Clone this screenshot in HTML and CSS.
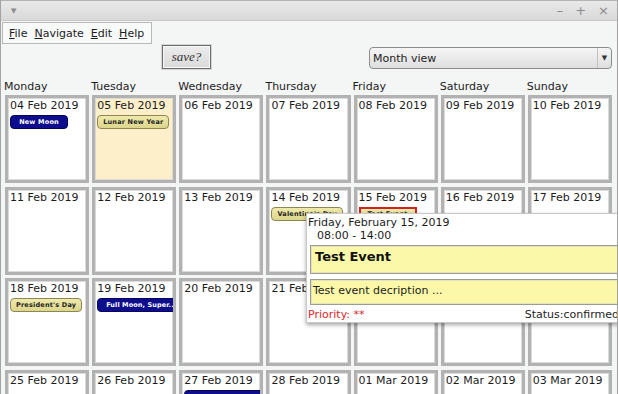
FILE: index.html
```html
<!DOCTYPE html>
<html lang="en">
<head>
    <meta charset="UTF-8">
    <title>Calendar</title>
    <link rel="stylesheet" href="styles.css">
</head>
<body>
    <div class="window">
        <div class="titlebar">
            <span class="tb-menu">&#9660;</span>
            <span class="tb-buttons"><span>&#8211;</span><span>+</span><span>&#215;</span></span>
        </div>

        <div class="menubar">
            <span><u>F</u>ile</span>
            <span><u>N</u>avigate</span>
            <span><u>E</u>dit</span>
            <span><u>H</u>elp</span>
        </div>

        <div class="toolbar">
            <button class="save-btn">save?</button>
            <div class="view-select">
                <span class="view-label">Month view</span>
                <span class="view-arrow">&#9660;</span>
            </div>
        </div>

        <div class="weekdays">
            <div>Monday</div>
            <div>Tuesday</div>
            <div>Wednesday</div>
            <div>Thursday</div>
            <div>Friday</div>
            <div>Saturday</div>
            <div>Sunday</div>
        </div>

        <div class="month">
            <div class="day"><div class="date">04 Feb 2019</div><div class="badge blue">New Moon</div></div>
            <div class="day today"><div class="date">05 Feb 2019</div><div class="badge khaki">Lunar New Year</div></div>
            <div class="day"><div class="date">06 Feb 2019</div></div>
            <div class="day"><div class="date">07 Feb 2019</div></div>
            <div class="day"><div class="date">08 Feb 2019</div></div>
            <div class="day"><div class="date">09 Feb 2019</div></div>
            <div class="day"><div class="date">10 Feb 2019</div></div>

            <div class="day"><div class="date">11 Feb 2019</div></div>
            <div class="day"><div class="date">12 Feb 2019</div></div>
            <div class="day"><div class="date">13 Feb 2019</div></div>
            <div class="day"><div class="date">14 Feb 2019</div><div class="badge khaki">Valentine's Day</div></div>
            <div class="day"><div class="date">15 Feb 2019</div><div class="badge khaki selected">Test Event</div></div>
            <div class="day"><div class="date">16 Feb 2019</div></div>
            <div class="day"><div class="date">17 Feb 2019</div></div>

            <div class="day"><div class="date">18 Feb 2019</div><div class="badge khaki">President's Day</div></div>
            <div class="day"><div class="date">19 Feb 2019</div><div class="badge blue wide">Full Moon, Super...</div></div>
            <div class="day"><div class="date">20 Feb 2019</div></div>
            <div class="day"><div class="date">21 Feb 2019</div></div>
            <div class="day"><div class="date">22 Feb 2019</div></div>
            <div class="day"><div class="date">23 Feb 2019</div></div>
            <div class="day"><div class="date">24 Feb 2019</div></div>

            <div class="day"><div class="date">25 Feb 2019</div></div>
            <div class="day"><div class="date">26 Feb 2019</div></div>
            <div class="day"><div class="date">27 Feb 2019</div><div class="badge blue wide">Last Quarter</div></div>
            <div class="day"><div class="date">28 Feb 2019</div></div>
            <div class="day"><div class="date">01 Mar 2019</div></div>
            <div class="day"><div class="date">02 Mar 2019</div></div>
            <div class="day"><div class="date">03 Mar 2019</div></div>
        </div>

        <!-- event tooltip -->
        <div class="event-popup">
            <div class="popup-date">Friday, February 15, 2019</div>
            <div class="popup-time">08:00 - 14:00</div>
            <div class="popup-box popup-title">Test Event</div>
            <div class="popup-box popup-desc">Test event decription ...</div>
            <div class="popup-footer">
                <span class="priority">Priority: **</span>
                <span class="status">Status:confirmed</span>
            </div>
        </div>
    </div>
</body>
</html>
```

FILE: styles.css
```css
* {
    margin: 0;
    padding: 0;
    box-sizing: border-box;
}

body {
    font-family: 'DejaVu Sans', sans-serif;
    font-size: 11px;
    color: #1c1c1c;
    background: #f4f5f5;
}

.window {
    position: relative;
    width: 618px;
    height: 394px;
    overflow: hidden;
    background: #f4f5f5;
    border-left: 1px solid #a4a4a4;
    border-right: 1px solid #a4a4a4;
}

/* Title bar */
.titlebar {
    height: 21px;
    display: flex;
    align-items: center;
    justify-content: space-between;
    padding: 0 8px 0 10px;
    background: linear-gradient(#e9e9e9, #d9d9d9);
    border-top: 1px solid #b4b4b4;
    border-bottom: 1px solid #c8c8c8;
    color: #8a8a8a;
}

.tb-menu {
    font-size: 7px;
}

.tb-buttons {
    display: flex;
    gap: 12px;
    font-size: 13px;
}

/* Menu bar */
.menubar {
    display: flex;
    gap: 7px;
    width: 150px;
    height: 22px;
    margin: 1px 0 0 1px;
    padding: 4px 0 0 6px;
    background: #f8f9f9;
    border: 1px solid #b8b8b8;
    line-height: 13px;
}

.menubar u {
    text-decoration-thickness: 1px;
    text-underline-offset: 1px;
}

/* Toolbar */
.toolbar {
    display: flex;
    align-items: flex-start;
    margin-top: 1px;
    height: 25px;
}

.save-btn {
    width: 49px;
    height: 24px;
    margin-left: 161px;
    font-family: 'Liberation Serif', serif;
    font-style: italic;
    font-size: 13px;
    color: #333;
    background: linear-gradient(#ececec, #dadada);
    border: 1px solid #6e6e6e;
    box-shadow: inset 0 0 0 1px #f6f6f6, 0 0 0 1px #d4d4d4;
}

.view-select {
    display: flex;
    align-items: center;
    width: 243px;
    height: 22px;
    margin: 2px 0 0 158px;
    background: linear-gradient(#f6f6f6, #dedede);
    border: 1px solid #8c8c8c;
    border-radius: 4px;
}

.view-label {
    flex: 1;
    padding-left: 3px;
}

.view-arrow {
    width: 14px;
    height: 100%;
    display: flex;
    align-items: center;
    justify-content: center;
    font-size: 7px;
    color: #333;
    border-left: 1px solid #c2c2c2;
}

/* Weekday headings */
.weekdays {
    display: grid;
    grid-template-columns: repeat(7, 1fr);
    column-gap: 3px;
    width: 607px;
    margin: 10px 0 0 3px;
    line-height: 13px;
}

/* Month grid */
.month {
    display: grid;
    grid-template-columns: repeat(7, 1fr);
    grid-auto-rows: 88px;
    column-gap: 3px;
    row-gap: 3.5px;
    width: 607px;
    margin: 2px 0 0 4px;
}

.day {
    background: #fff;
    border: 3px solid #b2b2b2;
    box-shadow: inset 0 0 0 1px #dadada;
    padding: 1px 2px;
    overflow: hidden;
}

.day.today {
    background: #fdefca;
}

.date {
    line-height: 13px;
}

/* Event badges */
.badge {
    width: fit-content;
    min-width: 58px;
    max-width: 100%;
    height: 14px;
    margin-top: 3px;
    padding: 0 5px;
    font-size: 6.5px;
    font-weight: bold;
    line-height: 12px;
    letter-spacing: 0.2px;
    text-align: center;
    white-space: nowrap;
    overflow: hidden;
    border-radius: 4px;
}

.badge.blue {
    background: #0d0d8e;
    border: 1px solid #05055a;
    color: #fff;
}

.badge.khaki {
    background: linear-gradient(#efeaab, #dcd58c);
    border: 1px solid #8d8755;
    color: #222;
}

.badge.selected {
    border: 2px solid #d42020;
    border-radius: 0;
    line-height: 10px;
}

.badge.wide {
    width: calc(100% + 3px);
    max-width: none;
    text-align: left;
    padding-left: 8px;
    letter-spacing: 0.1px;
    border-radius: 4px 0 0 4px;
}

/* Event popup */
.event-popup {
    position: absolute;
    left: 305px;
    top: 213px;
    width: 330px;
    height: 110px;
    padding: 2px 0 0 1px;
    background: #fff;
    border: 1px solid #c8c8c8;
    box-shadow: 0 2px 4px rgba(0, 0, 0, 0.35);
    line-height: 13px;
}

.popup-time {
    padding-left: 9px;
}

.popup-box {
    width: 309px;
    margin: 3px 0 0 2px;
    background: #fbf8a9;
    border: 1px solid #9c9c90;
    box-shadow: inset 0 0 0 1px #e4e2b8;
}

.popup-title {
    height: 29px;
    padding: 3px 0 0 4px;
    font-size: 13px;
    font-weight: bold;
    line-height: 15px;
    color: #111;
}

.popup-desc {
    height: 26px;
    margin-top: 5px;
    padding: 4px 0 0 2px;
}

.popup-footer {
    display: flex;
    justify-content: space-between;
    width: 311px;
    margin-top: 3px;
}

.priority {
    color: #e0262a;
}
```
